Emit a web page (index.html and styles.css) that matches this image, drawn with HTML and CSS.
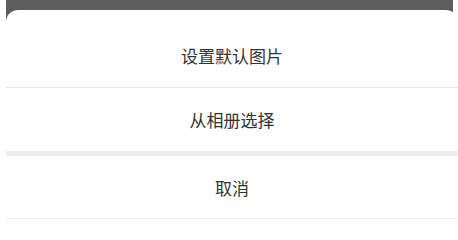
FILE: index.html
```html
<!DOCTYPE html>
<html lang="zh">
<head>
<meta charset="utf-8">
<link rel="stylesheet" href="styles.css">
</head>
<body>
<div class="wrap">
  <div class="backdrop"></div>
  <div class="sheet">
    <div class="item item-first">设置默认图片</div>
    <div class="item">从相册选择</div>
    <div class="gap"></div>
    <div class="item item-cancel">取消</div>
  </div>
</div>
</body>
</html>
```
FILE: styles.css
```css
html, body {
  margin: 0;
  padding: 0;
  background: #ffffff;
}
body {
  width: 458px;
  height: 221px;
  overflow: hidden;
  font-family: "Noto Sans CJK SC", "Noto Sans", sans-serif;
}
.wrap {
  margin-left: 6px;
}
.backdrop {
  height: 22px;
  margin-right: 5px;
  background: #5e5e5e;
}
.sheet {
  margin-top: -12px;
  background: #ffffff;
  border-radius: 12px 12px 0 0;
  padding-top: 13px;
}
.item {
  height: 63px;
  display: flex;
  align-items: center;
  justify-content: center;
  font-size: 17px;
  color: #333333;
}
.item-first {
  height: 64px;
  border-bottom: 1px solid #e8e8e8;
}
.gap {
  height: 5px;
  background: #eeeeee;
}
.item-cancel {
  height: 62px;
  border-bottom: 1px solid #ececec;
}
```
